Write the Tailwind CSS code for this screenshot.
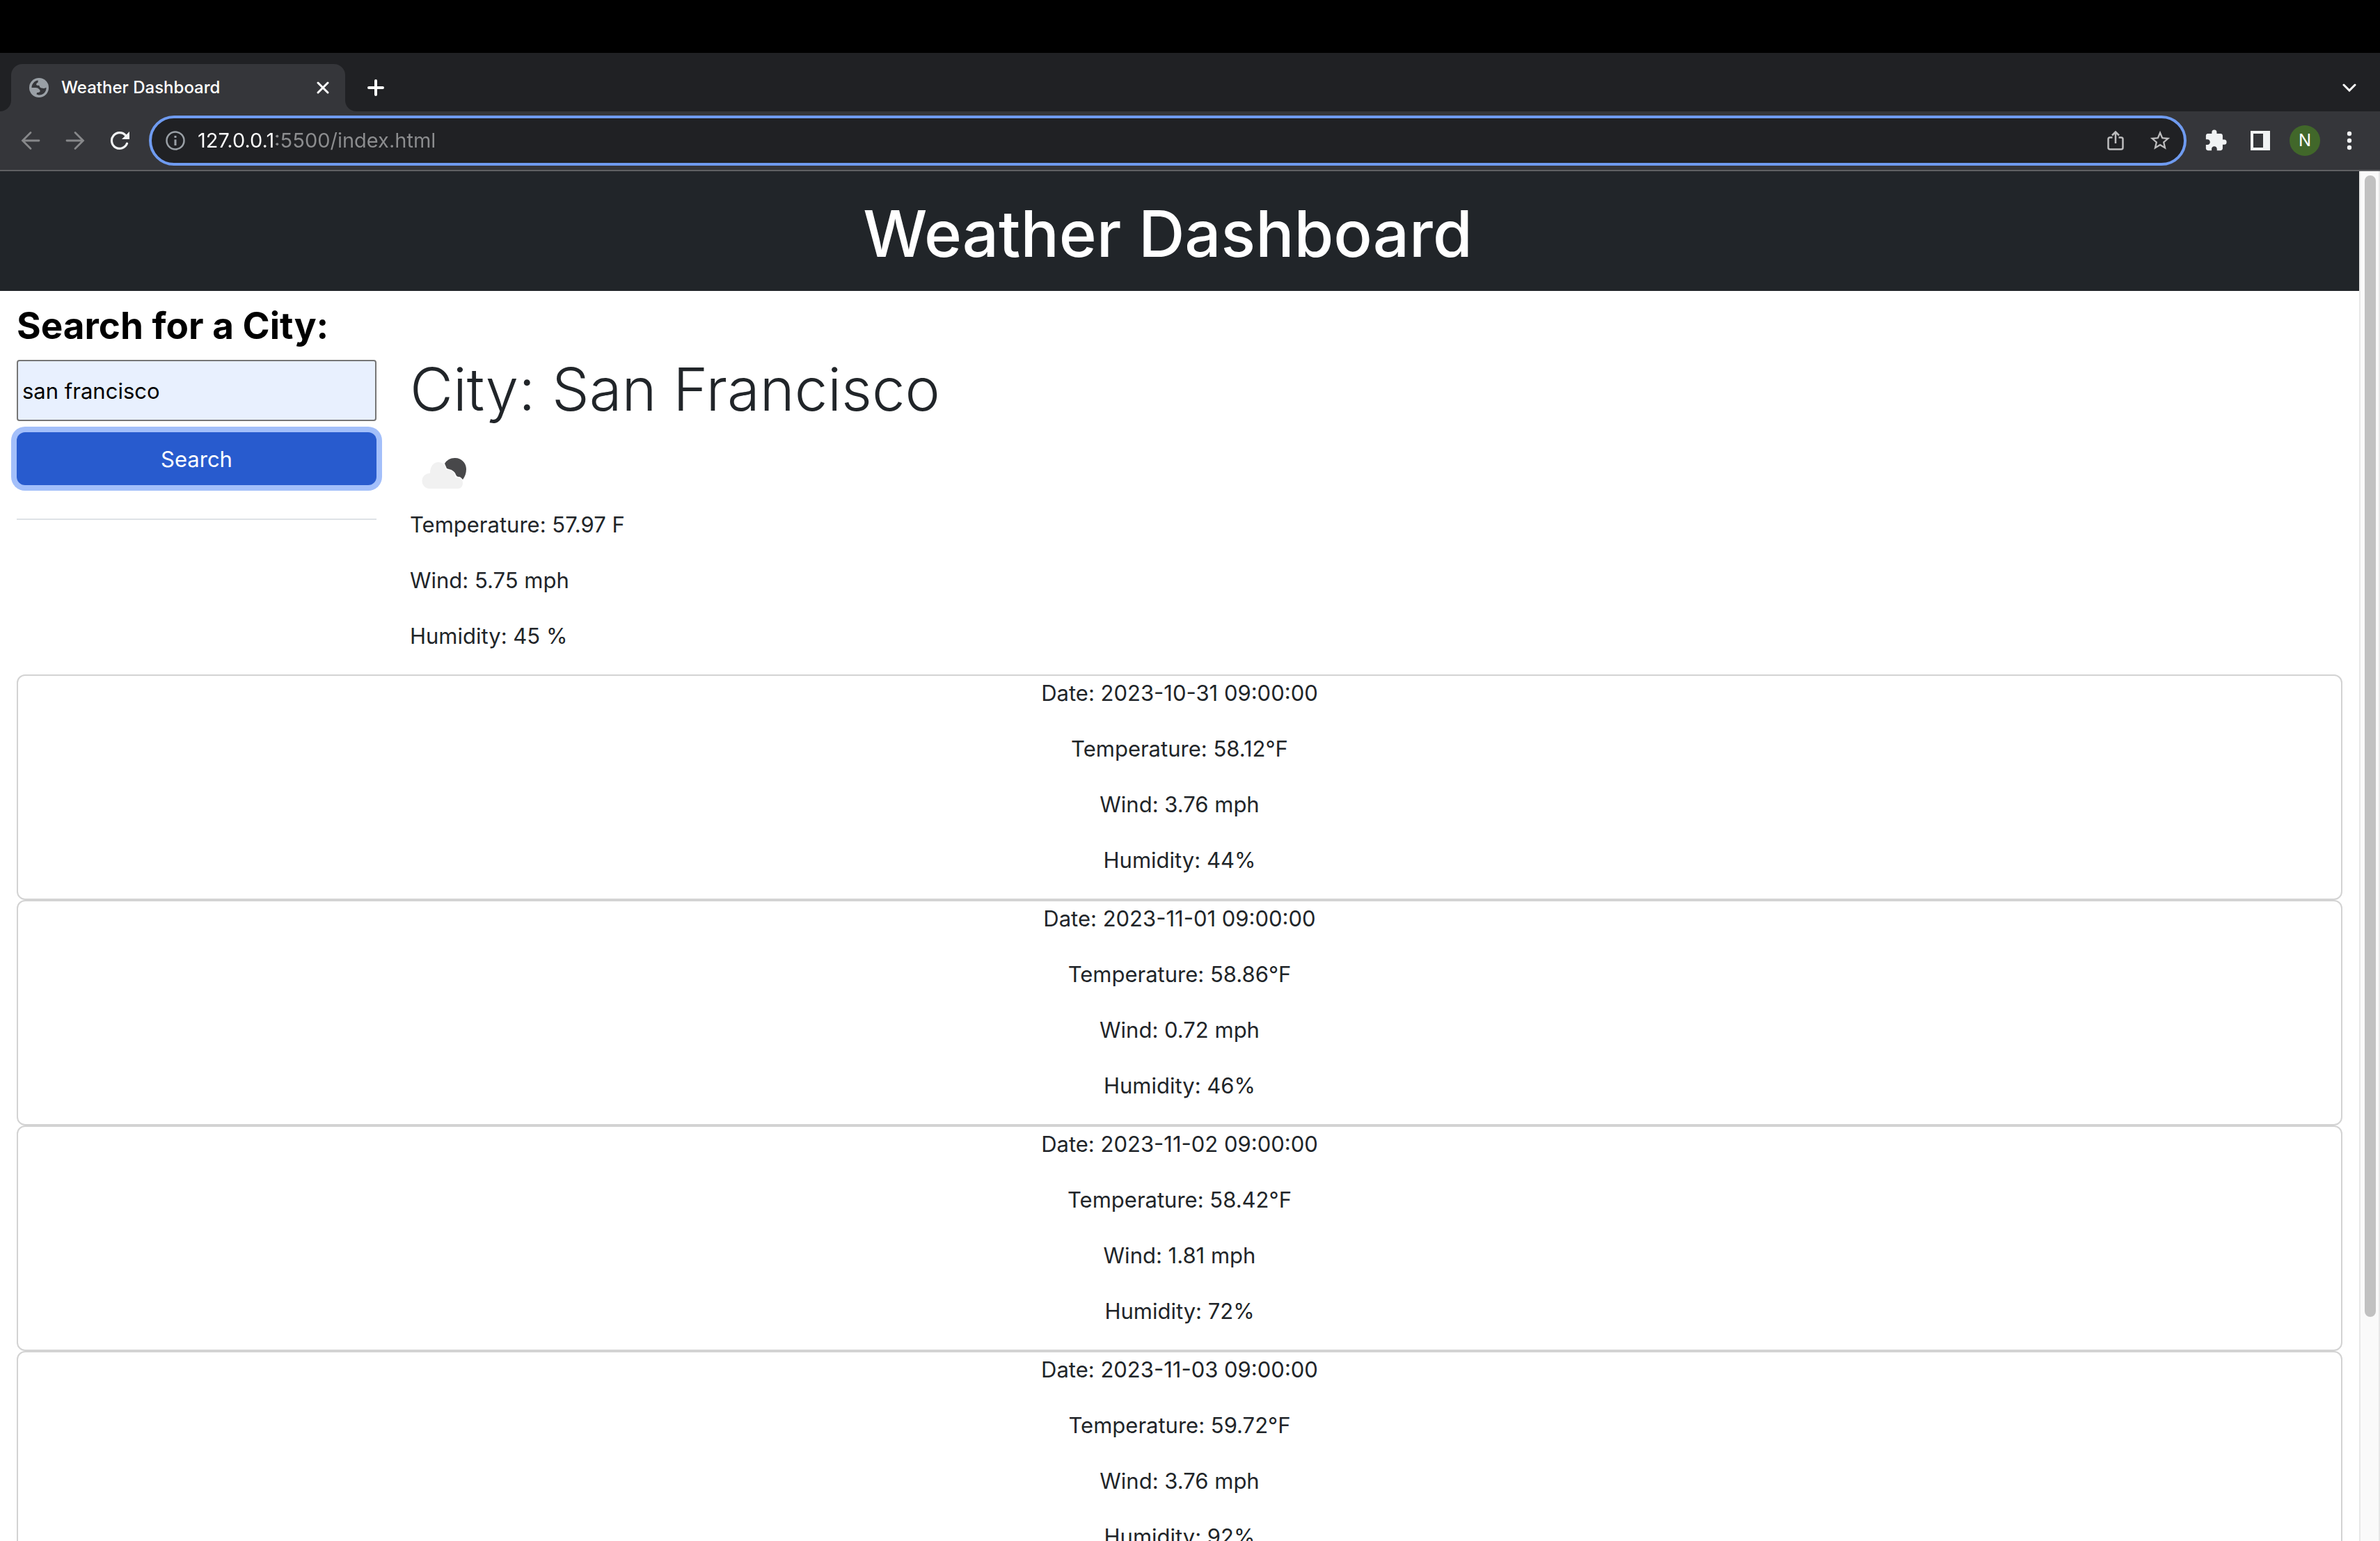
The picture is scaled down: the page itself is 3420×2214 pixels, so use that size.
<!DOCTYPE html>
<html lang="en">
<head>
<meta charset="utf-8">
<title>Weather Dashboard</title>
<script src="https://cdn.jsdelivr.net/npm/@tailwindcss/browser@4"></script>
</head>
<body class="flex h-screen flex-col overflow-hidden bg-black pt-[76px] font-['Inter',sans-serif]">

  <!-- Tab strip -->
  <header class="flex h-[84px] shrink-0 items-end bg-[#202124] text-white">
    <div class="flex h-[68px] items-stretch">
      <div class="w-4 bg-[#35363a]"><div class="h-full rounded-br-2xl bg-[#202124]"></div></div>
      <div class="flex w-[480px] items-center rounded-t-2xl bg-[#35363a] pr-4 pl-[26px]">
        <svg class="size-7 shrink-0" viewBox="0 0 28 28"><circle cx="14" cy="14" r="14" fill="#9aa0a6"/><path d="M3.500 14C3.500 8.500 7.500 4 12.800 3.500L12.500 6.500c-1.500.5-2.500 1.500-2.300 3 .3 1.500 2 1.300 4 1.300.8 1.700 1.300 3.700 3.500 3.700 1.800 0 2.800.8 4.300.2l2.500-1C24.800 20 20 24.800 13.500 24.500l-3-1 .5-2.300c1.800-.2 4-.2 4.500-1.700.6-1.500-.5-2.500-1.500-3.500-1-1.200-2.500-2-4.500-2z" fill="#35363a"/></svg>
        <span class="ml-[18px] flex-1 text-[24px] leading-8 font-medium">Weather Dashboard</span>
        <button class="grid size-8 place-items-center" aria-label="Close tab"><svg class="size-[18px]" viewBox="0 0 18 18" fill="none" stroke="#fff" stroke-width="3" stroke-linecap="round"><path d="M2 2l14 14M16 2L2 16"/></svg></button>
      </div>
      <div class="w-4 bg-[#35363a]"><div class="h-full rounded-bl-2xl bg-[#202124]"></div></div>
      <button class="grid w-14 place-items-center" aria-label="New tab"><svg class="size-6" viewBox="0 0 24 24" fill="none" stroke="#fff" stroke-width="4" stroke-linecap="round"><path d="M12 2v20M2 12h20"/></svg></button>
    </div>
    <button class="mr-3 ml-auto grid h-[68px] w-16 place-items-center" aria-label="Search tabs"><svg class="h-3 w-5" viewBox="0 0 20 12" fill="none" stroke="#fff" stroke-width="3" stroke-linecap="round"><path d="M2 2l8 8 8-8"/></svg></button>
  </header>

  <!-- Toolbar -->
  <nav class="flex h-[86px] shrink-0 items-center border-b-2 border-[#5f6063] bg-[#35363a] px-3 text-[#f1f3f4]">
    <button class="grid h-16 w-16 place-items-center" aria-label="Back"><svg class="size-7" viewBox="0 0 28 28" fill="none" stroke="#87888a" stroke-width="2.800" stroke-linecap="round"><path d="M26 14H3M14 2.500L2.500 14 14 25.500"/></svg></button>
    <button class="grid h-16 w-16 place-items-center" aria-label="Forward"><svg class="size-7" viewBox="0 0 28 28" fill="none" stroke="#87888a" stroke-width="2.800" stroke-linecap="round"><path d="M2 14h23M14 2.500L25.500 14 14 25.500"/></svg></button>
    <button class="grid h-16 w-16 place-items-center" aria-label="Reload"><svg class="size-7" viewBox="0 0 28 28"><path d="M24.500 18.200A11.400 11.400 0 1 1 22.500 6.500" fill="none" stroke="#f1f3f4" stroke-width="3.200" stroke-linecap="round"/><path d="M28 1v11H17z" fill="#f1f3f4"/></svg></button>
    <div class="mx-[10px] flex h-[72px] flex-1 items-center rounded-full border-4 border-[#6f9bf0] bg-[#202124] pr-0.5 pl-5">
      <svg class="size-7 shrink-0" viewBox="0 0 28 28" fill="none" stroke="#9aa0a6" stroke-width="2.500"><circle cx="14" cy="14" r="12.500"/><path d="M14 12.500v8.500M14 7v3" stroke-width="3"/></svg>
      <input class="ml-[18px] flex-1 bg-[linear-gradient(90deg,#fff_113px,#8c8d8f_113px)] bg-clip-text text-[29px] leading-10 text-transparent outline-none" aria-label="Address" value="127.0.0.1:5500/index.html">
      <button class="grid h-16 w-16 place-items-center" aria-label="Share"><svg class="h-7 w-6" viewBox="0 0 24 28" fill="none" stroke="#bdbdbe" stroke-width="2.500"><path d="M7.500 9.500H4A2.500 2.500 0 0 0 1.500 12v12A2.500 2.500 0 0 0 4 26.500h16a2.500 2.500 0 0 0 2.500-2.500V12A2.500 2.500 0 0 0 20 9.500h-3.500M12 18V2M7 6.500l5-5 5 5"/></svg></button>
      <button class="grid h-16 w-16 place-items-center" aria-label="Bookmark"><svg class="size-[34px]" viewBox="0 0 24 24" fill="#bdbdbe"><path d="M22 9.240l-7.190-.62L12 2 9.190 8.630 2 9.240l5.460 4.730L5.820 21 12 17.270 18.180 21l-1.630-7.030L22 9.240zM12 15.400l-3.760 2.270 1-4.280-3.320-2.880 4.380-.38L12 6.100l1.710 4.040 4.380.38-3.320 2.880 1 4.280L12 15.400z"/></svg></button>
    </div>
    <button class="grid h-16 w-16 place-items-center" aria-label="Extensions"><svg class="size-[34px]" viewBox="0 0 24 24" fill="currentColor"><path d="M20.500 11H19V7c0-1.100-.9-2-2-2h-4V3.500a2.500 2.500 0 0 0-5 0V5H4c-1.100 0-1.990.9-1.990 2v3.800H3.500c1.490 0 2.700 1.210 2.700 2.700s-1.210 2.700-2.700 2.700H2V20c0 1.100.9 2 2 2h3.800v-1.500c0-1.490 1.210-2.700 2.700-2.700s2.700 1.210 2.700 2.700V22H17c1.100 0 2-.9 2-2v-4h1.500a2.500 2.500 0 0 0 0-5z"/></svg></button>
    <button class="grid h-16 w-16 place-items-center" aria-label="Side panel"><svg class="size-7" viewBox="0 0 28 28" fill="currentColor"><path fill-rule="evenodd" d="M0 0h28v28H0zM4 4v20h14V4z"/></svg></button>
    <button class="grid h-16 w-16 place-items-center" aria-label="Profile"><span class="grid size-11 place-items-center rounded-full bg-[#41672a] text-[24px] leading-none text-white">N</span></button>
    <button class="grid h-16 w-16 place-items-center" aria-label="Menu"><svg class="h-7 w-2" viewBox="0 0 8 28" fill="currentColor"><circle cx="4" cy="4" r="3.200"/><circle cx="4" cy="14" r="3.200"/><circle cx="4" cy="24" r="3.200"/></svg></button>
  </nav>

  <!-- Web page -->
  <div class="flex min-h-0 flex-1 bg-white">
    <div class="min-w-0 flex-1 overflow-hidden text-[31px] leading-[48px] text-[#212529]">
      <div class="bg-[#212529] pt-[30px] pr-[34px] pb-[22px] text-center text-white">
        <h1 class="text-[92px] leading-[120px] font-medium">Weather Dashboard</h1>
      </div>
      <main class="px-6">
        <div class="flex items-start">
          <form class="mr-12 flex w-[517px] shrink-0 flex-col pt-[17px]">
            <label for="city" class="text-[53px] leading-[66px] font-bold whitespace-nowrap text-black">Search for a City:</label>
            <input id="city" class="mt-4 h-[88px] rounded-sm border-2 border-[#767676] bg-[#e8f0fe] px-[6px] text-black" value="san francisco">
            <button type="button" class="mt-4 h-[76px] rounded-xl bg-[#285bce] pt-0.5 text-white ring-8 ring-[#a3bffa]">Search</button>
            <hr class="mt-12 border-t-2 border-[#dee2e6]">
          </form>
          <section class="pt-[84px] pb-[31px]">
            <h2 class="text-[85px] leading-[115px] font-light">City: San Francisco</h2>
            <svg class="mt-[13px] size-[100px]" viewBox="0 -3 100 100"><path d="M50 33a17 17 0 0 1 15-8c9 0 16 7 16 16 0 6-2 11-5 15-2-2-3-4-6-4-2 0-3-1-4-3-1-4-5-7-10-8l-3-1z" fill="#48484a"/><path d="M28 69a11 11 0 0 1 1-22c0-10 5-16 12-16 6 0 10 4 11 11 8-1 13 4 13 11 7 0 11 3 11 8 0 5-3 8-7 8z" fill="#f1f1f1"/></svg>
            <div class="flex flex-col gap-8">
              <p>Temperature: 57.97 F</p>
              <p>Wind: 5.75 mph</p>
              <p>Humidity: 45 %</p>
            </div>
          </section>
        </div>
        <section class="text-center">
          <article class="flex flex-col gap-8 rounded-xl border-2 border-[#d3d3d3] pt-px pb-[31px]">
            <p>Date: 2023-10-31 09:00:00</p>
            <p>Temperature: 58.12°F</p>
            <p>Wind: 3.76 mph</p>
            <p>Humidity: 44%</p>
          </article>
          <article class="flex flex-col gap-8 rounded-xl border-2 border-[#d3d3d3] pt-px pb-[31px]">
            <p>Date: 2023-11-01 09:00:00</p>
            <p>Temperature: 58.86°F</p>
            <p>Wind: 0.72 mph</p>
            <p>Humidity: 46%</p>
          </article>
          <article class="flex flex-col gap-8 rounded-xl border-2 border-[#d3d3d3] pt-px pb-[31px]">
            <p>Date: 2023-11-02 09:00:00</p>
            <p>Temperature: 58.42°F</p>
            <p>Wind: 1.81 mph</p>
            <p>Humidity: 72%</p>
          </article>
          <article class="flex flex-col gap-8 rounded-xl border-2 border-[#d3d3d3] pt-px pb-[31px]">
            <p>Date: 2023-11-03 09:00:00</p>
            <p>Temperature: 59.72°F</p>
            <p>Wind: 3.76 mph</p>
            <p>Humidity: 92%</p>
          </article>
        </section>
      </main>
    </div>
    <!-- Scrollbar -->
    <div class="w-[30px] shrink-0 border-x-2 border-[#e8e8e8] bg-[#fafafa] px-[6px] pt-[6px]">
      <div class="h-[83.6%] w-4 rounded-full bg-[#c1c1c1]"></div>
    </div>
  </div>
</body>
</html>
